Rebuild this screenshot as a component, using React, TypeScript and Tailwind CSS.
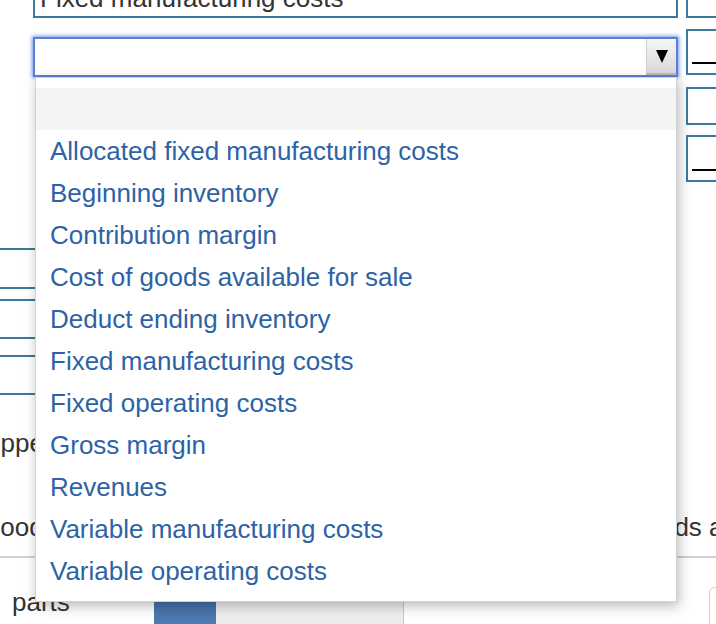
import React from "react";

const items = [
  "Allocated fixed manufacturing costs",
  "Beginning inventory",
  "Contribution margin",
  "Cost of goods available for sale",
  "Deduct ending inventory",
  "Fixed manufacturing costs",
  "Fixed operating costs",
  "Gross margin",
  "Revenues",
  "Variable manufacturing costs",
  "Variable operating costs",
];

export default function App() {
  return (
    <div
      className="relative w-[716px] h-[624px] overflow-hidden bg-white text-[#333333]"
      style={{ fontFamily: '"Liberation Sans", Arial, Helvetica, sans-serif' }}
    >
      {/* top region */}
      <div className="flex">
        <div className="w-[33px] shrink-0" />
        <div className="w-[645px] shrink-0 flex flex-col">
          <div className="mt-[-22px] h-[40px] border-2 border-[#3b7a9c] pl-[5px] pt-[3px] text-[26px] leading-[30px] whitespace-nowrap overflow-hidden">
            Fixed manufacturing costs
          </div>
          <div className="mt-[19px] h-[40px] border-2 border-[#5b7fd6] shadow-[0_0_4px_1px_#7595e4] bg-white flex justify-end">
            <div className="w-[30px] h-full bg-gradient-to-b from-[#f6f6f6] to-[#d9d9d9] border-l border-[#cfcfcf] border-b-2 border-b-[#bdbdbd] flex items-center justify-center">
              <svg width="12" height="13" viewBox="0 0 12 13">
                <polygon points="0,0 12,0 6,13" fill="#000" />
              </svg>
            </div>
          </div>
        </div>
        <div className="w-[8px] shrink-0" />
        <div className="flex flex-col w-[60px] shrink-0">
          <div className="mt-[-22px] h-[40px] border-2 border-[#3b7a9c]" />
          <div className="mt-[11px] h-[46px] border-2 border-[#3b7a9c] flex flex-col justify-end pb-[9px] pl-[4px]">
            <div className="h-[2px] bg-black w-full" />
          </div>
          <div className="mt-[12px] h-[38px] border-2 border-[#3b7a9c]" />
          <div className="mt-[10px] h-[47px] border-2 border-[#3b7a9c] flex flex-col justify-end pb-[9px] pl-[4px]">
            <div className="h-[2px] bg-black w-full" />
          </div>
        </div>
      </div>

      {/* left boxes partially hidden */}
      <div className="mt-[66px] ml-[-20px] w-[140px] h-[41px] border-2 border-[#3b7a9c]" />
      <div className="mt-[10px] ml-[-20px] w-[140px] h-[40px] border-2 border-[#3b7a9c]" />
      <div className="mt-[16px] ml-[-20px] w-[140px] h-[40px] border-2 border-[#3b7a9c]" />

      <div className="mt-[33px] ml-[-14px] text-[26px] leading-[30px] whitespace-nowrap">
        upper
      </div>

      <div className="mt-[54px] flex text-[26px] leading-[30px] whitespace-nowrap">
        <div className="w-[631px] shrink-0 overflow-hidden">
          <span className="ml-[-20px] inline-block">Goods</span>
        </div>
        <div className="whitespace-nowrap">goods are</div>
      </div>

      <div className="mt-[14px] h-[2px] w-full bg-[#cdd1dc]" />

      <div className="mt-[28px] flex">
        <div className="w-[154px] shrink-0 pl-[12px] text-[26px] leading-[33px]">
          <div>parts</div>
          <div>module</div>
        </div>
        <div className="w-[62px] shrink-0 h-[60px] mt-[14px] bg-gradient-to-b from-[#4570a8] to-[#5a8cc6]" />
        <div className="w-[188px] shrink-0 h-[60px] mt-[14px] bg-gradient-to-b from-[#f1f1f1] to-[#e2e2e2] border-r border-[#c8c8c8]" />
        <div className="w-[305px] shrink-0" />
        <div className="shrink-0 mt-[1px] w-[40px] h-[60px] border border-[#cfcfcf] rounded-tl-[6px]" />
      </div>

      {/* open dropdown list overlay */}
      <div className="absolute left-[35px] top-[77px] w-[642px] h-[525px] bg-white border border-[#d2d2d2] shadow-[2px_4px_12px_rgba(0,0,0,0.28)] pt-[10px]">
        <div className="h-[42px] bg-[#f4f4f4]" />
        {items.map((t) => (
          <div
            key={t}
            className="h-[42px] pl-[14px] text-[26px] leading-[42px] text-[#2d63a6] whitespace-nowrap"
          >
            {t}
          </div>
        ))}
      </div>
    </div>
  );
}
